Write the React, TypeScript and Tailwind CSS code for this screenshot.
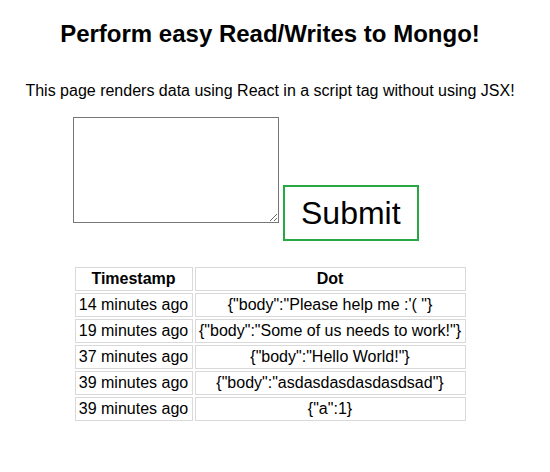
const DOTS = [
  { when: '14 minutes ago', body: '{"body":"Please help me :\'( "}' },
  { when: '19 minutes ago', body: '{"body":"Some of us needs to work!"}' },
  { when: '37 minutes ago', body: '{"body":"Hello World!"}' },
  { when: '39 minutes ago', body: '{"body":"asdasdasdasdasdsad"}' },
  { when: '39 minutes ago', body: '{"a":1}' },
]

export default function App() {
  return (
    <div className="min-h-[472px] bg-white text-black font-['Liberation_Sans',Arial,sans-serif] text-[16px]">
      <div className="w-[540px]">
        <h2 className="pt-[20px] text-center text-[24px] font-bold leading-[27px]">
          Perform easy Read/Writes to Mongo!
        </h2>

        <p className="mt-[35px] text-center leading-[18px]">
          This page renders data using React in a script tag without using JSX!
        </p>

        <div className="mt-[17px] flex items-end gap-[4px] pl-[73px]">
          <textarea className="mb-[18px] h-[106px] w-[206px] border border-[#767676] bg-white p-[2px]" />
          <button
            type="button"
            className="border-2 border-[#28a745] bg-white px-[16px] py-[8px] text-[32px] leading-[36px]"
          >
            Submit
          </button>
        </div>

        {/* Dots table — separate borders, 2px spacing */}
        <table className="mx-auto mt-[24px] border-separate border-spacing-[2px]">
          <thead>
            <tr>
              <th className="w-[118px] border border-[#d9d9d9] p-[2px] font-bold leading-[18px]">
                Timestamp
              </th>
              <th className="w-[271px] border border-[#d9d9d9] p-[2px] font-bold leading-[18px]">
                Dot
              </th>
            </tr>
          </thead>
          <tbody>
            {DOTS.map((d, i) => (
              <tr key={i}>
                <td className="border border-[#d9d9d9] p-[2px] text-center leading-[18px] whitespace-nowrap">
                  {d.when}
                </td>
                <td className="border border-[#d9d9d9] p-[2px] text-center leading-[18px] whitespace-nowrap">
                  {d.body}
                </td>
              </tr>
            ))}
          </tbody>
        </table>
      </div>
    </div>
  )
}
